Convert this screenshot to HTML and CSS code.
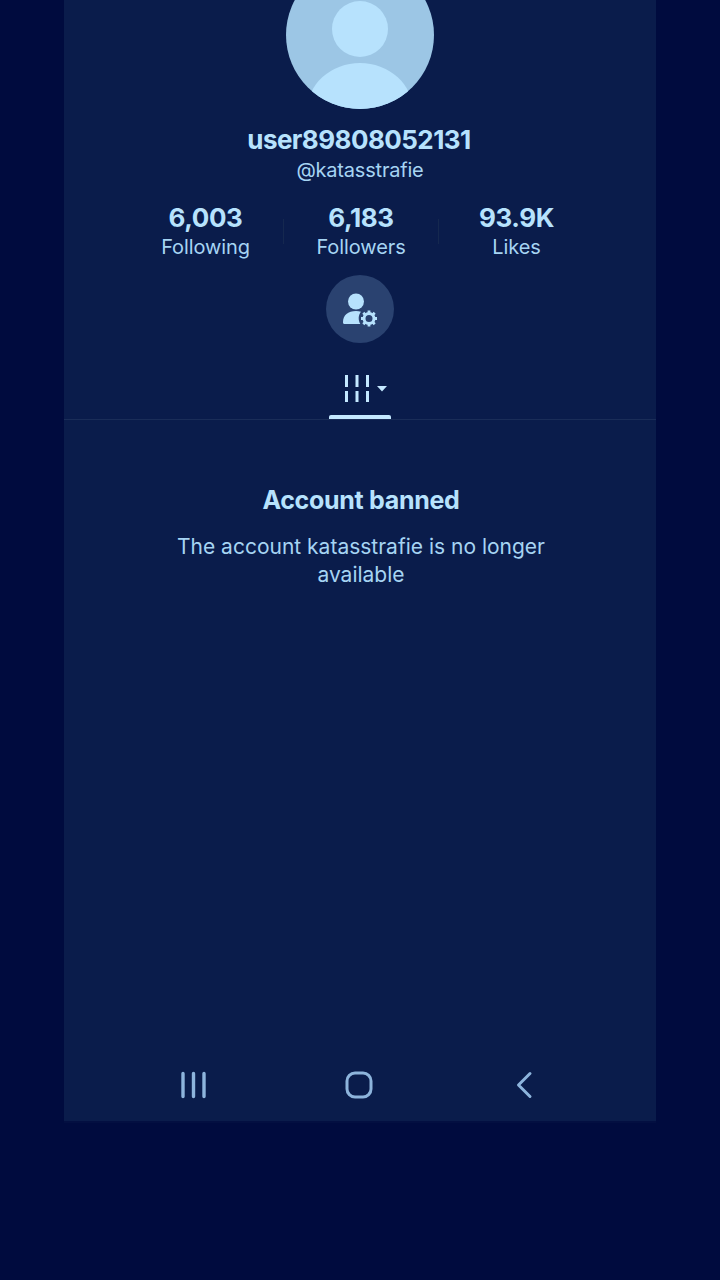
FILE: index.html
```html
<!DOCTYPE html>
<html lang="en">
<head>
<meta charset="utf-8">
<title>katasstrafie</title>
<link rel="stylesheet" href="styles.css">
</head>
<body>
<main class="screen">
  <section class="profile">
    <svg class="avatar" viewBox="0 0 148 148" width="148" height="148" aria-hidden="true">
      <defs><clipPath id="av"><circle cx="74" cy="74" r="74"/></clipPath></defs>
      <circle cx="74" cy="74" r="74" fill="#9cc6e5"/>
      <g clip-path="url(#av)" fill="#b7e2fd">
        <circle cx="74" cy="68" r="28"/>
        <ellipse cx="74" cy="150" rx="53" ry="48"/>
      </g>
    </svg>
    <h1 class="name">user89808052131</h1>
    <p class="handle">@katasstrafie</p>
    <div class="stats">
      <div class="stat"><strong>6,003</strong><span>Following</span></div>
      <i class="sep"></i>
      <div class="stat"><strong>6,183</strong><span>Followers</span></div>
      <i class="sep"></i>
      <div class="stat"><strong>93.9K</strong><span>Likes</span></div>
    </div>
    <div class="manage">
      <svg viewBox="0 0 36 36" width="36" height="36" aria-hidden="true">
        <circle cx="14" cy="10.500" r="8" fill="#b7e2fd"/>
        <path d="M1 31.500c0-7.500 5-11.500 13-11.500 1.800 0 3.500.2 5 .7-2.800 3.300-3 8-.7 12.300H2.500c-1 0-1.500-.6-1.500-1.500z" fill="#b7e2fd"/>
        <circle cx="27" cy="27.500" r="5" fill="none" stroke="#b7e2fd" stroke-width="3"/>
        <path d="M27 19.500v3M27 32.500v3M19 27.500h3M32 27.500h3M21.300 21.800l2.100 2.100M30.600 31.100l2.100 2.100M21.300 33.200l2.100-2.100M30.600 23.900l2.100-2.100" stroke="#b7e2fd" stroke-width="2.800"/>
      </svg>
    </div>
    <div class="tab">
      <svg class="tab-icon" viewBox="0 0 44 30" width="44" height="30" aria-hidden="true">
        <path d="M3.500 2v12M14 2v12M24.500 2v12M3.500 18v11M14 18v11M24.500 18v11" stroke="#c4e8ff" stroke-width="3" fill="none"/>
        <path d="M34 13h10l-5 5.500z" fill="#c4e8ff"/>
      </svg>
      <div class="tab-line"></div>
    </div>
  </section>
  <section class="notice">
    <h2>Account banned</h2>
    <p>The account katasstrafie is no longer<br>available</p>
  </section>
  <nav class="sysnav" aria-label="System navigation">
    <svg viewBox="0 0 28 28" width="28" height="28" aria-hidden="true"><path d="M4 2.500v23M14.500 2.500v23M25 2.500v23" stroke="#8db4dc" stroke-width="3.400" stroke-linecap="round"/></svg>
    <svg class="home" viewBox="0 0 30 30" width="30" height="30" aria-hidden="true"><rect x="3" y="3" width="24" height="24" rx="8" fill="none" stroke="#8db4dc" stroke-width="3"/></svg>
    <svg viewBox="0 0 20 30" width="20" height="30" aria-hidden="true"><path d="M16 3.500 4.500 15 16 26.500" fill="none" stroke="#8db4dc" stroke-width="3" stroke-linecap="round" stroke-linejoin="round"/></svg>
  </nav>
</main>
</body>
</html>
```
FILE: styles.css
```css
* { box-sizing: border-box; }
html, body { margin: 0; height: 100%; }
body {
  background: #000b3e;
  font-family: Inter, "Liberation Sans", sans-serif;
  color: #b7e2fd;
  height: 1280px;
  overflow: hidden;
}
.screen {
  width: 592px;
  height: 1121px;
  margin: 0 auto;
  background: #0a1c4b;
  box-shadow: 0 2px 0 #030f41;
  display: flex;
  flex-direction: column;
}
.profile {
  display: flex;
  flex-direction: column;
  align-items: center;
  margin-top: -39px;
  height: 459px;
  border-bottom: 1px solid #1a2d58;
}
.avatar { display: block; flex: none; }
.name {
  margin: 15px 0 0;
  padding-right: 2px;
  font-size: 26px;
  line-height: 32px;
  font-weight: 700;
  letter-spacing: -0.55px;
}
.handle {
  margin: 0;
  font-size: 20px;
  line-height: 28px;
  font-weight: 400;
  color: #a6d4f3;
  letter-spacing: -0.2px;
}
.stats {
  margin: 18px 0 0 2px;
  display: flex;
  align-items: center;
}
.stat {
  width: 154.5px;
  display: flex;
  flex-direction: column;
  align-items: center;
}
.stat strong {
  font-size: 26px;
  line-height: 32px;
  font-weight: 700;
  letter-spacing: -0.4px;
  margin-bottom: 1px;
}
.stat span {
  font-size: 20px;
  line-height: 25px;
  color: #a6d4f3;
  letter-spacing: -0.1px;
}
.sep {
  width: 1px;
  height: 25px;
  background: #15284f;
  flex: none;
}
.manage {
  margin-top: 15px;
  width: 68px;
  height: 68px;
  border-radius: 50%;
  background: #2a4270;
  display: flex;
  align-items: center;
  justify-content: center;
  margin-right: 1px;
}
.tab {
  margin-top: 30px;
  width: 62px;
  height: 46px;
  display: flex;
  flex-direction: column;
  justify-content: space-between;
}
.tab-icon { margin-left: 14px; display: block; }
.tab-line {
  height: 4px;
  background: #c4e8ff;
  border-radius: 2px 2px 0 0;
}
.notice {
  padding: 63px 0 0 2px;
  text-align: center;
  flex: 1;
}
.notice h2 {
  margin: 0;
  font-size: 25px;
  line-height: 34px;
  font-weight: 700;
  letter-spacing: -0.3px;
}
.notice p {
  margin: 16px 0 0;
  font-size: 21px;
  line-height: 28px;
  color: #a6d4f3;
}
.sysnav {
  height: 72px;
  display: flex;
  align-items: center;
  justify-content: space-between;
  padding: 0 122px 0 115px;
}
.home { margin-right: 4px; }
```
